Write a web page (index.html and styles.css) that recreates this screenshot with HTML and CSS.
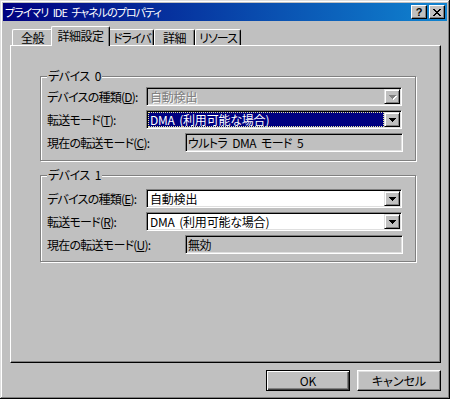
FILE: index.html
```html
<!DOCTYPE html>
<html lang="ja">
<head>
    <meta charset="UTF-8">
    <title>プライマリ IDE チャネルのプロパティ</title>
    <link rel="stylesheet" href="styles.css">
</head>
<body>
    <div class="window">
        <div class="titlebar">
            <span class="title">プライマリ IDE チャネルのプロパティ</span>
            <div class="caption-buttons">
                <span class="cbtn help">?</span>
                <span class="cbtn">
                    <svg width="8" height="7" viewBox="0 0 8 7"><path d="M0 0h2v1H0zM6 0h2v1H6zM1 1h2v1H1zM5 1h2v1H5zM2 2h4v1H2zM3 3h2v1H3zM2 4h4v1H2zM1 5h2v1H1zM5 5h2v1H5zM0 6h2v1H0zM6 6h2v1H6z"/></svg>
                </span>
            </div>
        </div>

        <div class="dialog">
            <div class="tabs">
                <div class="tab tab-general">全般</div>
                <div class="tab tab-advanced active">詳細設定</div>
                <div class="tab tab-driver">ドライバ</div>
                <div class="tab tab-details">詳細</div>
                <div class="tab tab-resources">リソース</div>
            </div>

            <div class="panel">
                <!-- device 0 -->
                <div class="group group-first">
                    <span class="group-title">デバイス 0</span>
                    <div class="fields">
                        <div class="field">
                            <span class="label">デバイスの種類(<u>D</u>):</span>
                            <div class="combo disabled">
                                <span class="combo-value">自動検出</span>
                                <span class="combo-button"><svg width="7" height="4" viewBox="0 0 7 4"><path d="M0 0h7v1H0zM1 1h5v1H1zM2 2h3v1H2zM3 3h1v1H3z"/></svg></span>
                            </div>
                        </div>
                        <div class="field">
                            <span class="label">転送モード(<u>T</u>):</span>
                            <div class="combo">
                                <span class="combo-value selected">DMA (利用可能な場合)</span>
                                <span class="combo-button"><svg width="7" height="4" viewBox="0 0 7 4"><path d="M0 0h7v1H0zM1 1h5v1H1zM2 2h3v1H2zM3 3h1v1H3z"/></svg></span>
                            </div>
                        </div>
                        <div class="field">
                            <span class="label label-wide">現在の転送モード(<u>C</u>):</span>
                            <div class="readout">ウルトラ DMA モード 5</div>
                        </div>
                    </div>
                </div>

                <!-- device 1 -->
                <div class="group group-second">
                    <span class="group-title">デバイス 1</span>
                    <div class="fields">
                        <div class="field">
                            <span class="label">デバイスの種類(<u>E</u>):</span>
                            <div class="combo">
                                <span class="combo-value">自動検出</span>
                                <span class="combo-button"><svg width="7" height="4" viewBox="0 0 7 4"><path d="M0 0h7v1H0zM1 1h5v1H1zM2 2h3v1H2zM3 3h1v1H3z"/></svg></span>
                            </div>
                        </div>
                        <div class="field">
                            <span class="label">転送モード(<u>R</u>):</span>
                            <div class="combo">
                                <span class="combo-value">DMA (利用可能な場合)</span>
                                <span class="combo-button"><svg width="7" height="4" viewBox="0 0 7 4"><path d="M0 0h7v1H0zM1 1h5v1H1zM2 2h3v1H2zM3 3h1v1H3z"/></svg></span>
                            </div>
                        </div>
                        <div class="field">
                            <span class="label label-wide">現在の転送モード(<u>U</u>):</span>
                            <div class="readout">無効</div>
                        </div>
                    </div>
                </div>
            </div>

            <div class="actions">
                <button class="btn default">OK</button>
                <button class="btn">キャンセル</button>
            </div>
        </div>
    </div>
</body>
</html>
```

FILE: styles.css
```css
body {
    margin: 0;
    background: #c0c0c0;
    font-family: "Noto Sans CJK JP", sans-serif;
    font-size: 12px;
    line-height: 15px;
    font-feature-settings: "palt";
    color: #000;
}
.window {
    width: 450px;
    height: 399px;
    box-sizing: border-box;
    padding: 3px;
    background: #c0c0c0;
    box-shadow: inset -1px -1px #000, inset 1px 1px #dfdfdf, inset -2px -2px #808080, inset 2px 2px #fff;
    display: flex;
    flex-direction: column;
}
.titlebar {
    height: 18px;
    display: flex;
    align-items: center;
    background: linear-gradient(to right, #000080, #1084d0);
    color: #fff;
}
.title {
    padding-left: 2px;
    font-size: 11px;
    letter-spacing: -1px;
    word-spacing: 3px;
    line-height: 16px;
}
.caption-buttons {
    margin-left: auto;
    margin-right: 2px;
    display: flex;
    gap: 2px;
}
.cbtn {
    width: 16px;
    height: 14px;
    box-sizing: border-box;
    display: flex;
    align-items: center;
    justify-content: center;
    background: #c0c0c0;
    color: #000;
    border: 1px solid;
    border-color: #fff #000 #000 #fff;
    box-shadow: inset -1px -1px #808080;
}
.help {
    font-family: "Liberation Sans", sans-serif;
    font-weight: bold;
    font-size: 11px;
    line-height: 12px;
}
.dialog {
    flex: 1;
    display: flex;
    flex-direction: column;
    padding: 5px 6px 0 7px;
}
.tabs {
    display: flex;
    align-items: flex-end;
    height: 19px;
    padding-left: 2px;
}
.tab {
    height: 16px;
    box-sizing: border-box;
    border-top: 1px solid #fff;
    border-left: 1px solid #fff;
    border-right: 1px solid #000;
    box-shadow: inset -1px 0 #808080;
    border-radius: 2px 2px 0 0;
    background: #c0c0c0;
    text-align: center;
    line-height: 15px;
    letter-spacing: -0.5px;
    white-space: nowrap;
}
.tab.active {
    height: 20px;
    margin: 0 -2px -1px;
    position: relative;
    z-index: 1;
    line-height: 17px;
}
.tab-general { width: 41px; }
.tab-advanced { width: 59px; }
.tab-driver { width: 46px; padding-left: 2px; letter-spacing: -1px; }
.tab-details { width: 41px; }
.tab-resources { width: 46px; letter-spacing: -1px; }
.panel {
    height: 318px;
    box-sizing: border-box;
    border: 1px solid;
    border-color: #fff #000 #000 #fff;
    box-shadow: inset -1px -1px #808080;
    padding: 30px 0 0 29px;
}
.group {
    width: 376px;
    box-sizing: border-box;
    border: 1px solid #808080;
    box-shadow: inset 1px 1px #fff, 1px 1px #fff;
    padding: 0 6px 8px;
}
.group-second {
    margin-top: 14px;
    padding-bottom: 7px;
}
.group-title {
    display: block;
    width: max-content;
    margin-top: -8px;
    padding: 0 1px;
    background: #c0c0c0;
    line-height: 14px;
    letter-spacing: -0.5px;
    word-spacing: 3px;
}
.fields {
    margin-top: 4px;
}
.group-second .fields {
    margin-top: 7px;
}
.field {
    display: flex;
    align-items: center;
    height: 19px;
}
.field + .field {
    margin-top: 4px;
}
.label {
    width: 99px;
    flex: none;
    white-space: nowrap;
    letter-spacing: -0.75px;
}
.label-wide {
    width: 138px;
}
.combo, .readout {
    height: 19px;
    box-sizing: border-box;
    border: 1px solid;
    border-color: #808080 #fff #fff #808080;
    box-shadow: inset 1px 1px #000, inset -1px -1px #dfdfdf;
    padding: 1px;
}
.combo {
    width: 256px;
    display: flex;
    background: #fff;
}
.combo-value {
    flex: 1;
    padding-left: 2px;
    line-height: 15px;
    white-space: nowrap;
    letter-spacing: -0.2px;
    word-spacing: 2px;
}
.combo-value.selected {
    background: #000080;
    color: #fff;
    outline: 1px dotted #e8e8a0;
    outline-offset: -1px;
}
.combo-button {
    width: 16px;
    height: 15px;
    box-sizing: border-box;
    display: flex;
    align-items: center;
    justify-content: center;
    background: #c0c0c0;
    border: 1px solid;
    border-color: #dfdfdf #000 #000 #dfdfdf;
    box-shadow: inset 1px 1px #fff, inset -1px -1px #808080;
}
.combo.disabled {
    background: #c0c0c0;
}
.combo.disabled .combo-value {
    color: #808080;
    text-shadow: 1px 1px #fff;
}
.combo.disabled svg {
    fill: #808080;
    filter: drop-shadow(1px 1px 0 #fff);
}
.readout {
    width: 218px;
    background: #c0c0c0;
    padding-left: 2px;
    line-height: 15px;
    white-space: nowrap;
    letter-spacing: -0.6px;
    word-spacing: 3px;
}
.actions {
    display: flex;
    justify-content: flex-end;
    gap: 7px;
    margin-top: 7px;
}
.btn {
    width: 84px;
    height: 21px;
    box-sizing: border-box;
    font: inherit;
    color: #000;
    background: #c0c0c0;
    border: 1px solid;
    border-color: #fff #000 #000 #fff;
    box-shadow: inset -1px -1px #808080, inset 1px 1px #dfdfdf;
    padding: 0;
    line-height: 17px;
}
.btn.default {
    border-color: #000;
    box-shadow: inset 1px 1px #fff, inset -1px -1px #404040, inset -2px -2px #808080;
}
```
